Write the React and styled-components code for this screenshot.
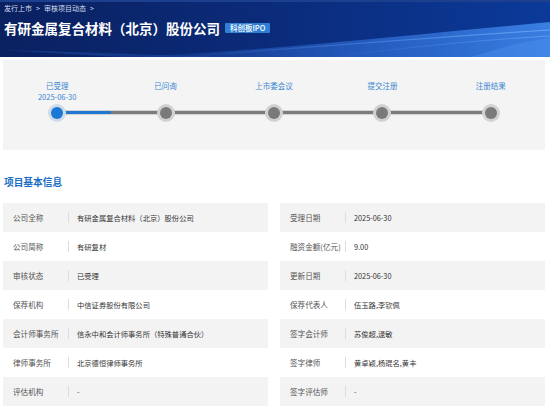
import React from "react";
import styled, { createGlobalStyle } from "styled-components";

const GlobalStyle = createGlobalStyle`
  html, body {
    margin: 0;
    padding: 0;
    background: #ffffff;
  }
  body {
    font-family: "Noto Sans CJK SC", "Noto Sans", "Liberation Sans", sans-serif;
  }
`;

const Page = styled.div`
  width: 550px;
  min-height: 410px;
  overflow: hidden;
`;

const Banner = styled.header`
  position: relative;
  height: 57px;
  overflow: hidden;
  background: linear-gradient(90deg, #0a2160 0%, #0b2a78 45%, #0b3a9a 100%);
  border-top: 2px solid #1c3f8e;
  box-sizing: border-box;
  color: #ffffff;
  padding: 2px 0 0 4px;
`;

const Wave = styled.svg`
  position: absolute;
  left: 0;
  bottom: 0;
  width: 550px;
  height: 57px;
  pointer-events: none;
`;

const Crumbs = styled.div`
  position: relative;
  font-size: 7px;
  line-height: 9px;
  color: #d6def0;
  display: flex;
  gap: 4px;
`;

const TitleRow = styled.div`
  position: relative;
  display: flex;
  align-items: center;
  gap: 5px;
  margin-top: 6px;
`;

const Title = styled.h1`
  margin: 0;
  font-size: 13.5px;
  line-height: 18px;
  font-weight: 700;
  letter-spacing: 0;
`;

const Badge = styled.span`
  background: #2f80d4;
  color: #ffffff;
  font-size: 7.5px;
  line-height: 10px;
  padding: 0 5px;
  border-radius: 1px;
  font-weight: 500;
`;

const Progress = styled.section`
  margin: 3px 5px 0 3px;
  height: 90px;
  background: #f4f4f4;
  display: grid;
  grid-template-columns: repeat(5, 1fr);
  padding-top: 20px;
  box-sizing: border-box;
`;

const Step = styled.div`
  display: flex;
  flex-direction: column;
  align-items: center;
`;

const StepText = styled.div`
  height: 24px;
  font-size: 7.5px;
  line-height: 11px;
  color: #3a86d2;
  text-align: center;
`;

const DotCell = styled.div`
  position: relative;
  width: 100%;
  height: 18px;
  display: flex;
  justify-content: center;
  align-items: center;

  &::before,
  &::after {
    content: "";
    position: absolute;
    top: 6px;
    height: 3px;
    border-top: 1.5px solid #d2d2d2;
    border-bottom: 1.5px solid #d2d2d2;
    background: #7c7c7c;
  }
  &::before {
    left: 0;
    right: 50%;
    display: ${(p) => (p.$first ? "none" : "block")};
  }
  &::after {
    left: 50%;
    right: 0;
    display: ${(p) => (p.$last ? "none" : "block")};
    background: ${(p) => (p.$active ? "#1f77cf" : "#7c7c7c")};
  }
`;

const Dot = styled.span`
  position: relative;
  z-index: 1;
  width: 12px;
  height: 12px;
  border-radius: 50%;
  background: ${(p) => (p.$active ? "#1a78d6" : "#7a7a7a")};
  box-shadow: 0 0 0 3px ${(p) => (p.$active ? "#cfdbe8" : "#d2d2d2")};
`;

const SectionTitle = styled.h2`
  margin: 26px 0 0 4px;
  font-size: 9.7px;
  line-height: 12px;
  font-weight: 700;
  color: #1a6fc6;
`;

const InfoGrid = styled.div`
  margin: 15px 5px 0 3px;
  display: grid;
  grid-template-columns: 1fr 1fr;
  column-gap: 12px;
`;

const InfoRow = styled.div`
  height: 29px;
  display: flex;
  align-items: center;
  padding-left: 10px;
  background: ${(p) => (p.$shaded ? "#f3f3f3" : "#ffffff")};
`;

const Label = styled.span`
  width: 55px;
  flex-shrink: 0;
  font-size: 7.6px;
  color: #555555;
  white-space: nowrap;
`;

const Divider = styled.span`
  width: 1px;
  height: 11px;
  background: #dddddd;
  margin-right: 8px;
`;

const Value = styled.span`
  font-size: 7.3px;
  color: #333333;
  white-space: nowrap;
`;

const steps = [
  { label: "已受理", date: "2025-06-30", active: true },
  { label: "已问询" },
  { label: "上市委会议" },
  { label: "提交注册" },
  { label: "注册结果" },
];

const rows = [
  ["公司全称", "有研金属复合材料（北京）股份公司", "受理日期", "2025-06-30"],
  ["公司简称", "有研复材", "融资金额(亿元)", "9.00"],
  ["审核状态", "已受理", "更新日期", "2025-06-30"],
  ["保荐机构", "中信证券股份有限公司", "保荐代表人", "伍玉路,李钦佩"],
  ["会计师事务所", "信永中和会计师事务所（特殊普通合伙）", "签字会计师", "苏俊超,逯敏"],
  ["律师事务所", "北京德恒律师事务所", "签字律师", "黄卓颖,杨琨名,黄丰"],
  ["评估机构", "-", "签字评估师", "-"],
];

const App = () => {
  return (
    <Page>
      <GlobalStyle />
      <Banner>
        <Wave viewBox="0 0 550 57" preserveAspectRatio="none">
          <defs>
            <linearGradient id="wv1" x1="0" y1="0" x2="1" y2="0">
              <stop offset="0" stopColor="#2f6fd8" stopOpacity="0" />
              <stop offset="0.45" stopColor="#2f6fd8" stopOpacity="0.55" />
              <stop offset="1" stopColor="#3f86ea" stopOpacity="0.9" />
            </linearGradient>
            <linearGradient id="wv2" x1="0" y1="0" x2="1" y2="0">
              <stop offset="0" stopColor="#5a9cf0" stopOpacity="0" />
              <stop offset="0.6" stopColor="#5a9cf0" stopOpacity="0.5" />
              <stop offset="1" stopColor="#7ab4ff" stopOpacity="0.7" />
            </linearGradient>
          </defs>
          <path d="M120 57 C 250 52, 360 40, 550 22 L 550 57 Z" fill="url(#wv1)" />
          <path d="M0 50 C 90 52, 200 57, 260 57 L 120 57 Z" fill="#1d4aa6" opacity="0.5" />
          <path d="M180 57 C 300 48, 420 38, 550 30" stroke="url(#wv2)" strokeWidth="1.2" fill="none" />
          <path d="M330 57 C 420 46, 480 40, 550 36" stroke="url(#wv2)" strokeWidth="0.8" fill="none" />
          <path d="M470 57 C 500 48, 520 42, 550 38 L 550 57 Z" fill="#4f95f0" opacity="0.35" />
        </Wave>
        <Crumbs>
          <span>发行上市</span>
          <span>&gt;</span>
          <span>审核项目动态</span>
          <span>&gt;</span>
        </Crumbs>
        <TitleRow>
          <Title>有研金属复合材料（北京）股份公司</Title>
          <Badge>科创板IPO</Badge>
        </TitleRow>
      </Banner>

      <Progress>
        {steps.map((s, i) => (
          <Step key={s.label}>
            <StepText>
              <div>{s.label}</div>
              {s.date && <div>{s.date}</div>}
            </StepText>
            <DotCell $first={i === 0} $last={i === steps.length - 1} $active={s.active}>
              <Dot $active={s.active} />
            </DotCell>
          </Step>
        ))}
      </Progress>

      <SectionTitle>项目基本信息</SectionTitle>
      <InfoGrid>
        {rows.map((r, i) => (
          <React.Fragment key={r[0]}>
            <InfoRow $shaded={i % 2 === 0}>
              <Label>{r[0]}</Label>
              <Divider />
              <Value>{r[1]}</Value>
            </InfoRow>
            <InfoRow $shaded={i % 2 === 0}>
              <Label>{r[2]}</Label>
              <Divider />
              <Value>{r[3]}</Value>
            </InfoRow>
          </React.Fragment>
        ))}
      </InfoGrid>
    </Page>
  );
};

export default App;
